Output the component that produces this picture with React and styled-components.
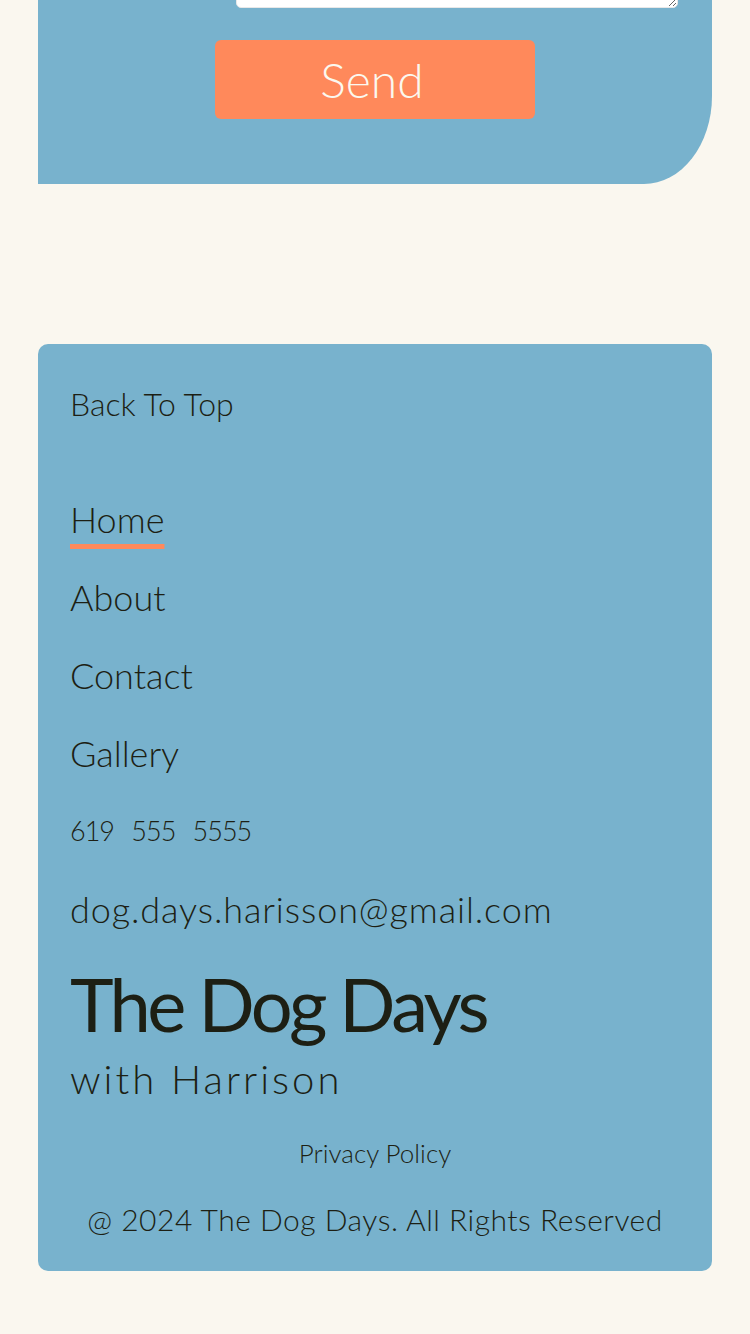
import React from 'react';
import styled, { createGlobalStyle } from 'styled-components';

const GlobalStyle = createGlobalStyle`
  html, body {
    margin: 0;
    padding: 0;
    background-color: #faf7ef;
    overflow: hidden;
  }
  body {
    font-family: Lato, "Open Sans", sans-serif;
    color: #1d1f14;
  }
`;

const Page = styled.div`
  padding: 0 38px 64px;
`;

const ContactSection = styled.section`
  background-color: #78b2cd;
  border-bottom-right-radius: 68px 88px;
  display: flex;
  flex-direction: column;
  padding-bottom: 65px;
`;

const MessageBox = styled.textarea`
  display: block;
  box-sizing: border-box;
  margin: -100px 34px 0 198px;
  height: 108px;
  border: 1px solid #e8e8e8;
  border-radius: 0 0 5px 5px;
  background: #ffffff;
  resize: vertical;
  outline: none;
`;

const SendButton = styled.button`
  align-self: center;
  margin-top: 32px;
  width: 320px;
  height: 79px;
  border: none;
  border-radius: 6px;
  background-color: #ff895b;
  color: #fbf8ef;
  font-family: Lato, sans-serif;
  font-weight: 300;
  font-size: 48px;
  padding: 0 6px 0 0;
  cursor: pointer;
`;

const Footer = styled.footer`
  margin-top: 160px;
  background-color: #78b2cd;
  border-radius: 10px;
  padding: 40px 32px 34px;
  display: flex;
  flex-direction: column;
`;

const BackToTop = styled.a`
  font-weight: 300;
  font-size: 32px;
  line-height: 40px;
  color: inherit;
  text-decoration: none;
`;

const NavList = styled.nav`
  margin-top: 73px;
  display: flex;
  flex-direction: column;
  align-items: flex-start;
  gap: 34px;
`;

const NavItem = styled.a`
  font-weight: 300;
  font-size: ${(p) => (p.$small ? 27 : 36)}px;
  line-height: 44px;
  letter-spacing: ${(p) => p.$spacing || 0}px;
  word-spacing: ${(p) => (p.$small ? 11 : 0)}px;
  color: inherit;
  text-decoration: ${(p) => (p.$active ? 'underline' : 'none')};
  text-decoration-color: #ff895b;
  text-decoration-thickness: 5px;
  text-underline-offset: 11px;
  text-decoration-skip-ink: none;
`;

const Brand = styled.div`
  margin-top: 35px;
  display: flex;
  flex-direction: column;
`;

const BrandTitle = styled.div`
  font-weight: 400;
  font-size: 74px;
  line-height: 76px;
  letter-spacing: -3.5px;
`;

const BrandSub = styled.div`
  margin-top: 15px;
  font-weight: 300;
  font-size: 40px;
  line-height: 44px;
  letter-spacing: 3px;
`;

const Legal = styled.div`
  margin-top: ${(p) => p.$gap}px;
  text-align: center;
  font-weight: 300;
  font-size: ${(p) => p.$size}px;
  line-height: ${(p) => p.$size + 6}px;
  letter-spacing: ${(p) => p.$spacing || 0}px;
`;

const navLinks = [
  { label: 'Home', active: true },
  { label: 'About' },
  { label: 'Contact' },
  { label: 'Gallery' },
  { label: '619 555 5555', small: true, spacing: -1 },
  { label: 'dog.days.harisson@gmail.com', spacing: 0.9 },
];

export default function App() {
  return (
    <>
      <GlobalStyle />
      <Page>
        <ContactSection>
          <MessageBox />
          <SendButton>Send</SendButton>
        </ContactSection>

        <Footer>
          <BackToTop href="#top">Back To Top</BackToTop>
          <NavList>
            {navLinks.map((link) => (
              <NavItem
                key={link.label}
                href="#"
                $active={link.active}
                $small={link.small}
                $spacing={link.spacing}
              >
                {link.label}
              </NavItem>
            ))}
          </NavList>
          <Brand>
            <BrandTitle>The Dog Days</BrandTitle>
            <BrandSub>with Harrison</BrandSub>
          </Brand>
          <Legal $gap={36} $size={26}>Privacy Policy</Legal>
          <Legal $gap={32} $size={30} $spacing={0.5}>
            @ 2024 The Dog Days. All Rights Reserved
          </Legal>
        </Footer>
      </Page>
    </>
  );
}
